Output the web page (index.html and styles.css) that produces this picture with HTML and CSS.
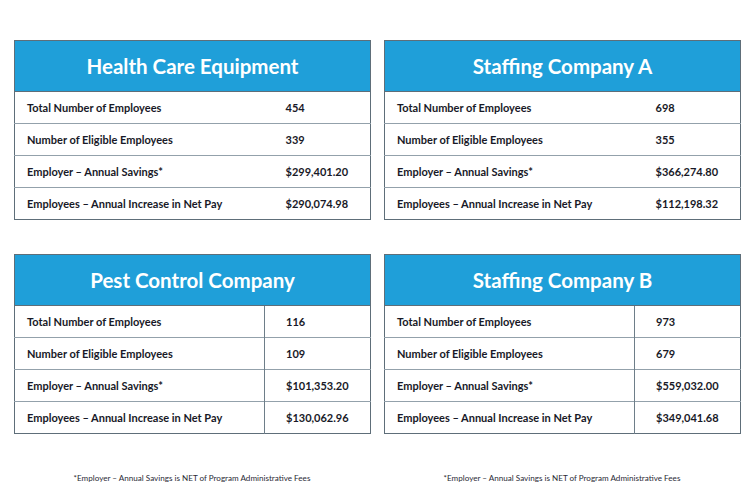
FILE: index.html
```html
<!DOCTYPE html>
<html>
<head>
<meta charset="utf-8">
<link rel="stylesheet" href="styles.css">
</head>
<body>
<div class="page">
  <div class="grid">
    <table class="card">
      <colgroup><col class="c1"><col class="c2"></colgroup>
      <tr><th colspan="2" class="head">Health Care Equipment</th></tr>
      <tr><td class="label">Total Number of Employees</td><td class="val">454</td></tr>
      <tr><td class="label">Number of Eligible Employees</td><td class="val">339</td></tr>
      <tr><td class="label">Employer – Annual Savings*</td><td class="val">$299,401.20</td></tr>
      <tr><td class="label">Employees – Annual Increase in Net Pay</td><td class="val">$290,074.98</td></tr>
    </table>
    <table class="card">
      <colgroup><col class="c1"><col class="c2"></colgroup>
      <tr><th colspan="2" class="head">Staffing Company A</th></tr>
      <tr><td class="label">Total Number of Employees</td><td class="val">698</td></tr>
      <tr><td class="label">Number of Eligible Employees</td><td class="val">355</td></tr>
      <tr><td class="label">Employer – Annual Savings*</td><td class="val">$366,274.80</td></tr>
      <tr><td class="label">Employees – Annual Increase in Net Pay</td><td class="val">$112,198.32</td></tr>
    </table>
    <table class="card divided">
      <colgroup><col class="c1"><col class="c2"></colgroup>
      <tr><th colspan="2" class="head">Pest Control Company</th></tr>
      <tr><td class="label">Total Number of Employees</td><td class="val">116</td></tr>
      <tr><td class="label">Number of Eligible Employees</td><td class="val">109</td></tr>
      <tr><td class="label">Employer – Annual Savings*</td><td class="val">$101,353.20</td></tr>
      <tr><td class="label">Employees – Annual Increase in Net Pay</td><td class="val">$130,062.96</td></tr>
    </table>
    <table class="card divided">
      <colgroup><col class="c1"><col class="c2"></colgroup>
      <tr><th colspan="2" class="head">Staffing Company B</th></tr>
      <tr><td class="label">Total Number of Employees</td><td class="val">973</td></tr>
      <tr><td class="label">Number of Eligible Employees</td><td class="val">679</td></tr>
      <tr><td class="label">Employer – Annual Savings*</td><td class="val">$559,032.00</td></tr>
      <tr><td class="label">Employees – Annual Increase in Net Pay</td><td class="val">$349,041.68</td></tr>
    </table>
    <p class="note">*Employer – Annual Savings is NET of Program Administrative Fees</p>
    <p class="note">*Employer – Annual Savings is NET of Program Administrative Fees</p>
  </div>
</div>
</body>
</html>
```

FILE: styles.css
```css
html, body {
  margin: 0;
  padding: 0;
  background: #ffffff;
}
.page {
  padding: 40px 0 0 14px;
  font-family: Lato, "Noto Sans", sans-serif;
  color: #181927;
}
.grid {
  display: grid;
  grid-template-columns: 356px 356px;
  column-gap: 14px;
  row-gap: 34px;
}
.card {
  width: 356px;
  border-collapse: collapse;
  border: 1px solid #5e6e79;
  table-layout: fixed;
}
.c1 {
  width: 250px;
}
.c2 {
  width: 106px;
}
.head {
  background: #1f9fd9;
  color: #ffffff;
  font-size: 20.5px;
  font-weight: 700;
  height: 50px;
  padding: 0;
  text-align: center;
  border-bottom: 1px solid #5e6e79;
}
.card td {
  height: 31px;
  padding: 0;
  font-size: 11px;
  font-weight: 700;
  white-space: nowrap;
  border-top: 1px solid #93a1ab;
}
.card tr:nth-child(2) td {
  border-top: none;
}
.card td.label {
  padding-left: 12px;
}
.card td.val {
  padding-left: 21px;
}
.divided td.val {
  border-left: 1px solid #6e7e89;
}
.note {
  margin: 5px 0 0 0;
  line-height: 10px;
  text-align: center;
  font-size: 8.1px;
  color: #2a2a35;
}
```
